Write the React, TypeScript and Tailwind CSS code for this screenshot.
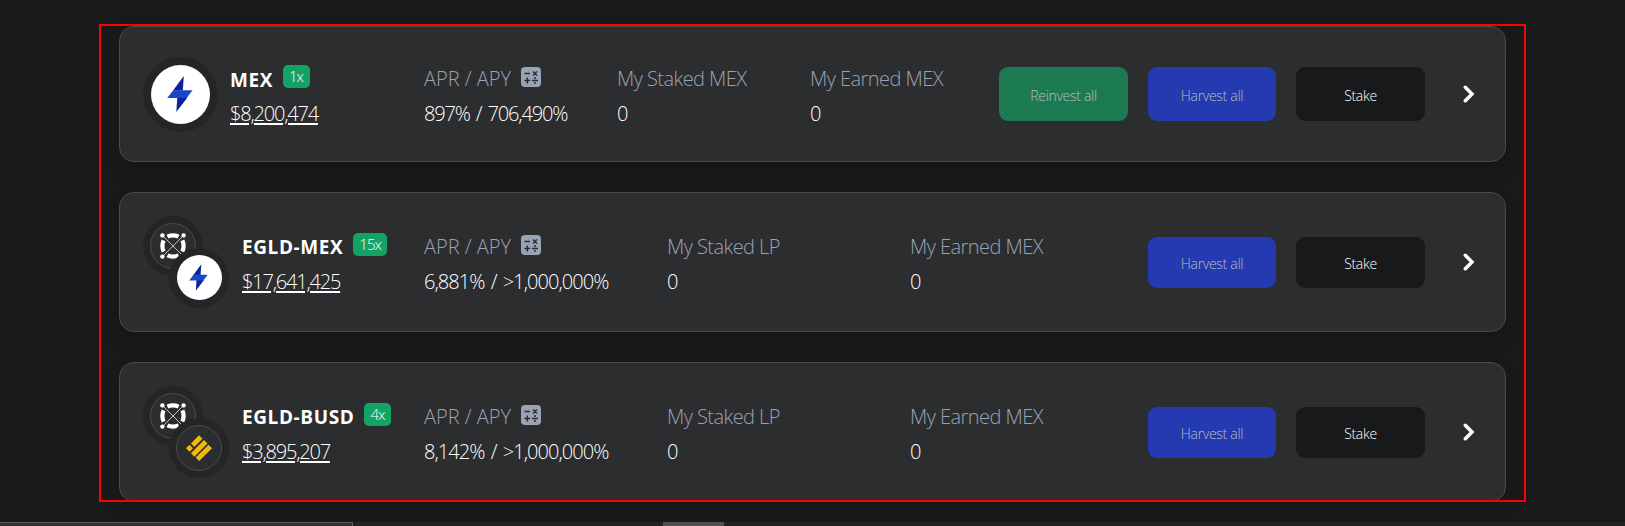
import React from "react";

function Bolt({ className }: { className: string }) {
  return (
    <svg viewBox="0 0 26 36" className={className}>
      <path d="M16.8 0 L6 14.5 H15.8 Z" fill="#0b22a0" />
      <path d="M9.3 36 L20.5 21.5 H10.3 Z" fill="#0b22a0" />
      <path d="M6.2 14.2 H25.6 L19.6 22 H0.2 Z" fill="#1c46c8" />
    </svg>
  );
}

function Egld() {
  return (
    <svg viewBox="0 0 26 26" className="size-[26px]" fill="none" stroke="#fff">
      <path d="M3 3 L23 23 M23 3 L3 23" strokeWidth="0.7" />
      <path
        d="M7.4 3.6 Q13 1.2 18.6 3.6 M7.4 22.4 Q13 24.8 18.6 22.4 M3.6 7.4 Q1.2 13 3.6 18.6 M22.4 7.4 Q24.8 13 22.4 18.6"
        strokeWidth="4.2"
      />
      <g fill="#fff" stroke="none">
        <circle cx="2.4" cy="2.4" r="2.2" />
        <circle cx="23.6" cy="2.4" r="2.2" />
        <circle cx="2.4" cy="23.6" r="2.2" />
        <circle cx="23.6" cy="23.6" r="2.2" />
      </g>
    </svg>
  );
}

function Busd() {
  return (
    <svg viewBox="0 0 26 26" className="size-[26px]" fill="#f0b90b">
      <path d="M13 0.3 L16.5 3.8 L8.4 11.9 L4.9 8.4 Z" />
      <path d="M18 5.1 L21.5 8.6 L8.4 21.7 L4.9 18.2 Z" />
      <path d="M22.5 9.7 L26 13.2 L13.2 26 L9.7 22.5 Z" />
      <path d="M3.5 9.7 L7 13.2 L3.5 16.7 L0 13.2 Z" />
    </svg>
  );
}

function Calc() {
  return (
    <svg viewBox="0 0 20 20" className="mb-[4px] size-5 shrink-0">
      <rect width="20" height="20" rx="4" fill="#9aa3b5" />
      <path
        d="M3.5 6.5h5.4 M12 4.5l4 4 M16 4.5l-4 4 M3.4 13.5h5.8 M6.3 10.6v5.8 M11 13.5h6"
        stroke="#2c2d2f"
        strokeWidth="1.5"
      />
      <circle cx="14" cy="11.1" r="1" fill="#2c2d2f" />
      <circle cx="14" cy="15.9" r="1" fill="#2c2d2f" />
    </svg>
  );
}

function Chevron() {
  return (
    <svg viewBox="0 0 12 18" className="h-[18px] w-3" fill="none">
      <path d="M2.3 2.3 L9 9 L2.3 15.7" stroke="#fff" strokeWidth="3.5" strokeLinecap="round" strokeLinejoin="miter" />
    </svg>
  );
}

function Disc({ white, children }: { white?: boolean; children: React.ReactNode }) {
  return (
    <div className="flex size-[60px] items-center justify-center rounded-full bg-[#242527]">
      <div
        className={
          white
            ? "flex size-[45px] items-center justify-center rounded-full bg-white"
            : "flex size-[46px] items-center justify-center rounded-full border border-[#4a4b4d] bg-[#2c2d2f]"
        }
      >
        {children}
      </div>
    </div>
  );
}

const label = "flex h-[35px] items-center gap-[10px] whitespace-nowrap text-[20px] font-light text-[#9aa3b5]";
const value = "flex h-[35px] items-center whitespace-nowrap text-[20px] font-light text-white";

function Name({ name, badge, total, className }: { name: string; badge: string; total: string; className: string }) {
  return (
    <div className={className}>
      <div className="flex h-[35px] items-center gap-[9.5px] whitespace-nowrap text-[19px] font-bold text-white">
        <span className="pt-0.5 tracking-[0.6px]">{name}</span>
        <span className="mb-[5px] flex h-[23px] items-center rounded-[5px] bg-[#14a366] px-[6.5px] text-[15px] font-light tracking-[-1px]">
          {badge}
        </span>
      </div>
      <div className={value}>
        <span className="tracking-[-1.2px] underline decoration-2 underline-offset-[2px]">{total}</span>
      </div>
    </div>
  );
}

function Rate({ rate, tight, className }: { rate: string; tight?: boolean; className: string }) {
  return (
    <div className={className}>
      <div className={label}>
        <span>APR / APY</span>
        <Calc />
      </div>
      <div className={value}>
        <span className={tight ? "tracking-[-1.15px] [word-spacing:2px]" : "tracking-[-0.95px] [word-spacing:2px]"}>
          {rate}
        </span>
      </div>
    </div>
  );
}

function Stat({ title, className }: { title: string; className: string }) {
  return (
    <div className={className}>
      <div className={label}>
        <span className="tracking-[-0.55px]">{title}</span>
      </div>
      <div className={value}>0</div>
    </div>
  );
}

const button = "flex items-center justify-center rounded-[9px] pt-0.5 text-[14px] font-light tracking-[-0.3px]";

function Actions({ reinvest }: { reinvest?: boolean }) {
  const height = reinvest ? "h-[54px]" : "h-[51px]";
  return (
    <div className="ml-auto flex items-center gap-5">
      {reinvest && <button className={`${button} ${height} w-[129px] bg-[#1c7a52] text-[#b9bdb9]`}>Reinvest all</button>}
      <button className={`${button} ${height} w-[128px] bg-[#243ab0] text-[#b9bdb9]`}>Harvest all</button>
      <button className={`${button} ${height} w-[129px] bg-[#18191b] text-white`}>Stake</button>
      <div className="ml-[18px] mr-[30px]">
        <Chevron />
      </div>
    </div>
  );
}

const card =
  "flex items-center rounded-[15px] border border-[#4a4b4d] bg-[#2c2d2f] pl-[23px] shadow-[0_8px_16px_rgba(0,0,0,0.12)]";

function PairCard(props: { name: string; badge: string; total: string; rate: string; token: React.ReactNode }) {
  return (
    <section className={`${card} h-[140px]`}>
      <div className="relative h-[93px] w-[99px] shrink-0">
        <Disc>
          <Egld />
        </Disc>
        <div className="absolute left-[26px] top-8">{props.token}</div>
      </div>
      <Name name={props.name} badge={props.badge} total={props.total} className="mt-[4px] w-[182px]" />
      <Rate rate={props.rate} className="mt-[4px] w-[243px]" />
      <Stat title="My Staked LP" className="mt-[4px] w-[243px]" />
      <Stat title="My Earned MEX" className="mt-[4px]" />
      <Actions />
    </section>
  );
}

export default function App() {
  return (
    <main className="relative flex h-[526px] w-[1625px] flex-col overflow-hidden bg-[#18191b] font-['Open_Sans',sans-serif]">
      <div className="ml-[119px] mt-[26px] flex h-[496px] w-[1387px] shrink-0 flex-col gap-[30px]">
        <section className={`${card} h-[136px] shrink-0`}>
          <div className="flex size-[75px] shrink-0 items-center justify-center rounded-full bg-[#242527]">
            <div className="flex size-[59px] items-center justify-center rounded-full bg-white pr-px">
              <Bolt className="h-9 w-[26px]" />
            </div>
          </div>
          <Name name="MEX" badge="1x" total="$8,200,474" className="ml-[12px] mt-[5px] w-[194px]" />
          <Rate rate="897% / 706,490%" tight className="mt-[5px] w-[193px]" />
          <Stat title="My Staked MEX" className="mt-[5px] w-[193px]" />
          <Stat title="My Earned MEX" className="mt-[5px]" />
          <Actions reinvest />
        </section>
        <PairCard
          name="EGLD-MEX"
          badge="15x"
          total="$17,641,425"
          rate="6,881% / >1,000,000%"
          token={
            <Disc white>
              <Bolt className="mr-px h-[27px] w-[19px]" />
            </Disc>
          }
        />
        <PairCard
          name="EGLD-BUSD"
          badge="4x"
          total="$3,895,207"
          rate="8,142% / >1,000,000%"
          token={
            <Disc>
              <Busd />
            </Disc>
          }
        />
      </div>
      <footer className="flex h-1 bg-[#222222]">
        <div className="w-[353px] border-r border-t border-[#5a5a5a] bg-[#333333]" />
        <div className="ml-[310px] w-[61px] bg-[#505050]" />
      </footer>
      <div className="pointer-events-none absolute left-[99px] top-6 h-[478px] w-[1427px] border-2 border-[#ff0000]" />
    </main>
  );
}
